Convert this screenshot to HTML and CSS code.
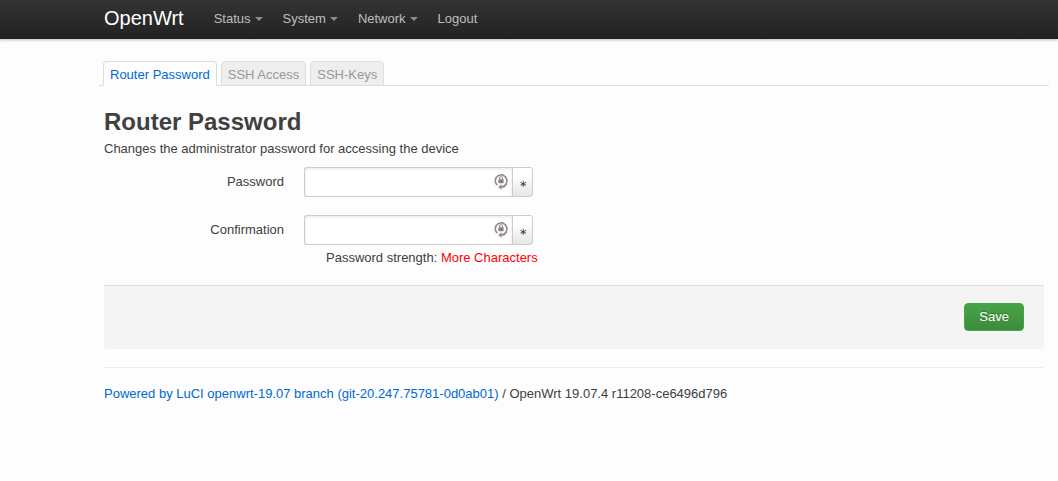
FILE: index.html
```html
<!DOCTYPE html>
<html lang="en">
<head>
<meta charset="utf-8">
<title>OpenWrt - Router Password</title>
<link rel="stylesheet" href="styles.css">
</head>
<body>
<svg class="sprite" aria-hidden="true">
  <symbol id="lock" viewBox="0 0 14 17">
    <path d="M3.4 12.2A5.8 5.8 0 1 1 12 10.8" fill="none" stroke="#968e8e" stroke-width="1.7"/>
    <path d="M12.4 10.6C11.4 12.8 9.8 13.9 7.4 14" fill="none" stroke="#968e8e" stroke-width="1.9"/>
    <path d="M4 14 7.6 11.3V16.7Z" fill="#968e8e"/>
    <path d="M5.5 6.8V5.2a1.5 1.5 0 0 1 3 0V6.8" fill="none" stroke="#968e8e" stroke-width="1.1"/>
    <rect x="4.4" y="6.2" width="5.2" height="4" rx=".4" fill="#867e7e"/>
  </symbol>
</svg>
<header class="topbar">
  <a class="brand" href="#">OpenWrt</a>
  <nav class="menu">
    <a class="menu-link dropdown" href="#">Status</a>
    <a class="menu-link dropdown" href="#">System</a>
    <a class="menu-link dropdown" href="#">Network</a>
    <a class="menu-link" href="#">Logout</a>
  </nav>
</header>
<nav class="tabs">
  <a class="tab active" href="#">Router Password</a>
  <a class="tab" href="#">SSH Access</a>
  <a class="tab" href="#">SSH-Keys</a>
</nav>
<main class="content">
  <h2 class="title">Router Password</h2>
  <p class="description">Changes the administrator password for accessing the device</p>
  <form>
    <div class="row">
      <label class="label" for="pw1">Password</label>
      <div class="control">
        <input class="field" id="pw1" type="password">
        <svg class="lock" aria-hidden="true"><use href="#lock"/></svg>
        <button class="reveal" type="button" aria-label="Reveal password">∗</button>
      </div>
    </div>
    <div class="row">
      <label class="label" for="pw2">Confirmation</label>
      <div class="control">
        <input class="field" id="pw2" type="password">
        <svg class="lock" aria-hidden="true"><use href="#lock"/></svg>
        <button class="reveal" type="button" aria-label="Reveal confirmation">∗</button>
      </div>
    </div>
    <p class="strength">Password strength: <span class="weak">More Characters</span></p>
    <div class="actions"><button class="save" type="submit">Save</button></div>
  </form>
  <footer class="footer"><a class="link" href="#">Powered by LuCI openwrt-19.07 branch (git-20.247.75781-0d0ab01)</a> / OpenWrt 19.07.4 r11208-ce6496d796</footer>
</main>
</body>
</html>
```
FILE: styles.css
```css
* { box-sizing: border-box; }
body {
  margin: 0;
  background: #fdfdfd;
  color: #404040;
  font: 13px/18px "Liberation Sans", Arial, sans-serif;
}
a { text-decoration: none; }
.sprite { display: none; }
.topbar {
  display: flex;
  align-items: center;
  height: 39px;
  padding: 0 14px 4px 104px;
  background: linear-gradient(#333, #222);
  box-shadow: 0 1px 3px rgba(0, 0, 0, .25), inset 0 -1px 0 rgba(0, 0, 0, .1);
}
.brand {
  padding-right: 20px;
  color: #fff;
  font-size: 20px;
  line-height: 32px;
}
.menu { display: flex; }
.menu-link {
  display: flex;
  align-items: center;
  gap: 4px;
  padding: 3px 10px 0;
  color: #bfbfbf;
}
.dropdown::after {
  content: "";
  border: 4px solid transparent;
  border-top-color: #8f8a93;
  border-bottom: 0;
}
.tabs {
  display: flex;
  gap: 4px;
  margin: 22px 9px 0 99px;
  padding-left: 4px;
  border-bottom: 1px solid #ddd;
}
.tab {
  margin-bottom: -1px;
  padding: 4px 6px 1px;
  border: 1px solid #ddd;
  border-radius: 4px 4px 0 0;
  background: #eee;
  color: #999;
}
.tab.active {
  border-bottom-color: #fdfdfd;
  background: #fdfdfd;
  color: #0069d6;
}
.content { padding: 18px 14px 0 104px; }
.title {
  margin: 0;
  font-size: 24px;
  line-height: 36px;
}
.description { margin: 0 0 9px; }
.row {
  display: flex;
  gap: 20px;
  margin-bottom: 18px;
}
.label {
  width: 180px;
  padding-top: 6px;
  text-align: right;
}
.control {
  position: relative;
  display: flex;
}
.field {
  width: 208px;
  height: 30px;
  padding: 4px 28px 4px 4px;
  border: 1px solid #ccc;
  border-right: 0;
  border-radius: 3px 0 0 3px;
  background: #fff;
  box-shadow: inset 0 1px 3px rgba(0, 0, 0, .1);
  font: inherit;
}
.lock {
  position: absolute;
  top: 6px;
  right: 25px;
  width: 14px;
  height: 17px;
}
.reveal {
  width: 21px;
  height: 30px;
  padding: 4px 0 0;
  border: 1px solid #ccc;
  border-radius: 0 3px 3px 0;
  background: linear-gradient(#fff 25%, #e6e6e6);
  color: #404040;
  font: 10px/18px "Liberation Sans", Arial, sans-serif;
}
.strength {
  margin: -14px 0 18px;
  padding-left: 222px;
}
.weak { color: #f00; }
.actions {
  display: flex;
  justify-content: flex-end;
  margin-bottom: 18px;
  padding: 17px 20px 18px;
  border-top: 1px solid #ddd;
  border-radius: 0 0 3px 3px;
  background: #f4f4f4;
}
.save {
  height: 28px;
  padding: 0 14px;
  border: 1px solid #46a546;
  border-radius: 4px;
  background: linear-gradient(#46a546, #3d8b3d);
  color: #fff;
  font: inherit;
  text-shadow: 0 -1px 0 rgba(0, 0, 0, .25);
}
.footer {
  padding: 17px 0;
  border-top: 1px solid #eee;
}
.link { color: #0069d6; }
```
